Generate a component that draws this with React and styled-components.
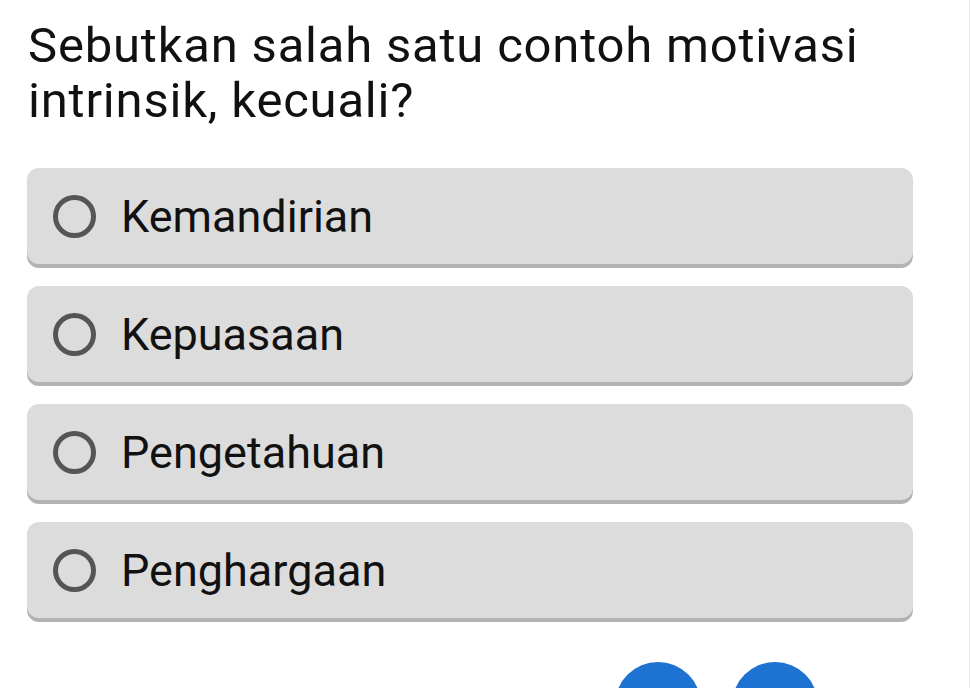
import React, { useState } from "react"
import styled, { createGlobalStyle } from "styled-components"

const GlobalStyle = createGlobalStyle`
    html, body {
        margin: 0;
        padding: 0;
        background: #ffffff;
    }
    body {
        font-family: Roboto, "Noto Sans", sans-serif;
        color: #111111;
        overflow: hidden;
    }
`

const Page = styled.div`
    width: 970px;
    height: 688px;
    border-right: 1px solid #eeeeee;
    box-sizing: border-box;
    padding: 18px 56px 0 27px;
    overflow: hidden;
`

const Question = styled.h1`
    margin: 0 0 40px 1px;
    font-size: 49px;
    font-weight: 400;
    line-height: 55px;
    letter-spacing: 0.8px;
`

const Options = styled.div`
    display: flex;
    flex-direction: column;
    gap: 22px;
`

const Option = styled.button`
    display: flex;
    align-items: center;
    gap: 25px;
    height: 96px;
    padding: 0 0 0 26px;
    border: none;
    border-radius: 12px;
    background: ${p => (p.selected ? "#c9dcf4" : "#dcdcdc")};
    box-shadow: 0 4px 0 #b3b3b3;
    font-family: inherit;
    font-size: 45px;
    color: #111111;
    text-align: left;
    cursor: pointer;
`

const Radio = styled.span`
    width: 33px;
    height: 33px;
    border-radius: 50%;
    border: 5px solid #555555;
    box-sizing: content-box;
    flex-shrink: 0;
    display: flex;
    align-items: center;
    justify-content: center;

    &::after {
        content: "";
        width: 19px;
        height: 19px;
        border-radius: 50%;
        background: ${p => (p.selected ? "#1e73d2" : "transparent")};
    }
`

const Nav = styled.div`
    display: flex;
    justify-content: flex-end;
    gap: 31px;
    padding-right: 95px;
    margin-top: 44px;
`

const NavButton = styled.button`
    width: 86px;
    height: 86px;
    border-radius: 50%;
    border: none;
    background: #1e73d2;
    cursor: pointer;
`

const options = ["Kemandirian", "Kepuasaan", "Pengetahuan", "Penghargaan"]

function App() {
    const [picked, setPicked] = useState(null)

    return (
        <>
            <GlobalStyle />
            <Page>
                <Question>Sebutkan salah satu contoh motivasi intrinsik, kecuali?</Question>
                <Options>
                    {options.map((o, i) => (
                        <Option key={o} selected={picked === i} onClick={() => setPicked(i)}>
                            <Radio selected={picked === i} />
                            {o}
                        </Option>
                    ))}
                </Options>
                <Nav>
                    <NavButton aria-label="previous" />
                    <NavButton aria-label="next" />
                </Nav>
            </Page>
        </>
    )
}

export default App
